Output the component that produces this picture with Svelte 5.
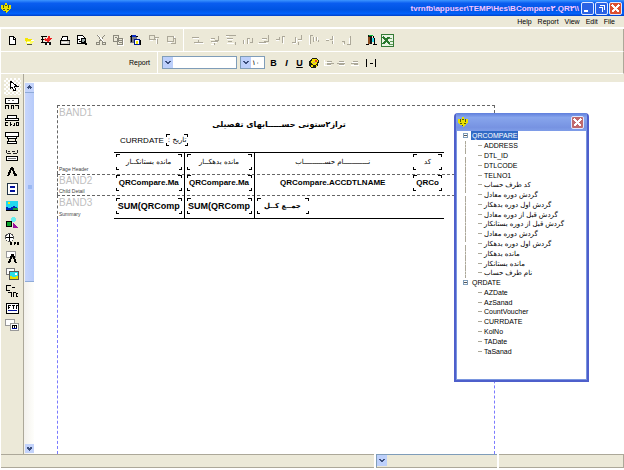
<script lang="ts">
    type Icon = { name: string; art: string };

    const menus = ['Help', 'Report', 'View', 'Edit', 'File'];

    const fileIcons: Icon[][] = [
        [
            { name: 'New', art: '<path d="M3.5 2.5h4l2 2v6h-6z" fill="#fff" stroke="#000"/><path d="M7 3v2h2" fill="none" stroke="#000"/>' },
            { name: 'Open', art: '<path d="M2 4h3v1h4v5H3z" fill="#f5e600"/><path d="M4 7h7l-2 3H3z" fill="#ff6"/><path d="M4 10.5h5M10 6.5h1" stroke="#554"/><path d="M8 6h3M4 8h3" stroke="#fff"/>' },
            { name: 'Save as', art: '<path d="M1 2.5h6M2.5 3v5M1 8.5h6M1 5.5h3" stroke="#000"/><path d="M5 4l2 2 1-4h2v2h2L8 8 4 6z" fill="#e22"/><path d="M5 8h6v3H5z" fill="#111"/><path d="M7 9h2v2H7z" fill="#fff"/>' },
        ],
        [
            { name: 'Print', art: '<path d="M4 2h5L8 6H2z" fill="#fff" stroke="#000"/><path d="M1.5 6.5h9v4h-9z" fill="#d4d0c8" stroke="#000"/><path d="M3 8.5h5" stroke="#fff"/><path d="M10 7h1v3h-1z" fill="#555"/>' },
            { name: 'Preview', art: '<path d="M1.5 1.5h5l2 2v6h-7z" fill="#fff" stroke="#000"/><path d="M1 5.5h3M3 7.5h3" stroke="#000"/><path d="M5 4h4v4H5z" fill="#9aa" stroke="#000"/><path d="M8 8l3 3" stroke="#000" stroke-width="2"/>' },
        ],
        [
            { name: 'Cut', art: '<path d="M2 1l7 8M10 1L3 9" stroke="#8b897d"/><path d="M3 1l7 8" stroke="#fff"/><path d="M1.5 8.5h3v2h-3zM7.5 8.5h3v2h-3z" fill="none" stroke="#8b897d"/>' },
            { name: 'Copy', art: '<path d="M1.5 1.5h5v6h-5zM5.5 4.5h5v6h-5z" fill="#ece9d8" stroke="#8b897d"/><path d="M3 3.5h2M7 6.5h3M7 8.5h3" stroke="#8b897d"/><path d="M11.5 5v6.5H6" stroke="#fff" fill="none"/>' },
            { name: 'Paste', art: '<path d="M1 2h7v7H1z" fill="#777a88"/><path d="M1 2.5h8M2.5 1v7" stroke="#000"/><path d="M3 1h4v2H3z" fill="#0a2cc0"/><path d="M5.5 5.5h5v5h-5z" fill="#fff" stroke="#001a90"/><path d="M7 7h2v3H7z" fill="#f6e800"/><path d="M11 6v5" stroke="#000"/>' },
        ],
        [
            { name: 'Send to back', art: '<path d="M1.5 1.5h5v4h-5zM5.5 5.5h4v4M5.5 3.5h5" fill="none" stroke="#aca899"/><path d="M2 6.5h3M8.5 4v6" stroke="#fff"/>' },
            { name: 'Bring to front', art: '<path d="M2.5 2.5h6v5h-6zM8 4.5h2v5H6" fill="none" stroke="#aca899"/><path d="M3 8.5h4M9.5 2v2" stroke="#fff"/>' },
        ],
    ];

    const alignIcons: Icon[] = [
        { name: 'Align left', art: '<path d="M0 3.5h7M2 8.5h9M6.5 6v2" stroke="#aca899"/><path d="M1 4.5h6M3 9.5h9" stroke="#fff"/>' },
        { name: 'Align centres', art: '<path d="M2 4.5h4M2 7.5h7M9.5 2v4H6M5.5 8v3" fill="none" stroke="#aca899"/><path d="M1 5.5h4M3 8.5h5M2 10.5h3" stroke="#fff"/>' },
        { name: 'Align right', art: '<path d="M1 1.5h10M2 4.5h6M3 7.5h4M10.5 8v3" stroke="#aca899"/><path d="M1 2.5h3M2 5.5h6M2 9.5h7" stroke="#fff"/>' },
        { name: 'Align tops', art: '<path d="M1.5 6v4M5.5 4v6M5 4.5h3M10.5 4v4H8" fill="none" stroke="#aca899"/><path d="M2.5 6v4M6.5 5v5" stroke="#fff"/>' },
        { name: 'Align middles', art: '<path d="M4 4.5h5M1 8.5h7M10.5 1v6H6" fill="none" stroke="#aca899"/><path d="M0 9.5h10M4 5.5h4" stroke="#fff"/>' },
        { name: 'Align bottoms', art: '<path d="M1 5.5h3M4.5 3v3M7.5 2v7M7 2.5h3" fill="none" stroke="#aca899"/><path d="M1 6.5h3M8.5 3v7" stroke="#fff"/>' },
        { name: 'Same width', art: '<path d="M1 8.5h4M4.5 3v6M7 5.5h4M10.5 1v5M7.5 8v3" stroke="#aca899"/><path d="M2 9.5h3M5.5 4v5M7 6.5h4" stroke="#fff"/>' },
        { name: 'Same height', art: '<path d="M2.5 1v9M5.5 3v5M8.5 3v4M10.5 6v2M2 1.5h3" stroke="#aca899"/><path d="M1.5 1v10M6.5 3v4M9.5 3v4" stroke="#fff"/>' },
        { name: 'Space across', art: '<path d="M2 6.5h3M8.5 2v3H6M8.5 7v3" fill="none" stroke="#aca899"/><path d="M2 5.5h3M9.5 2v8" stroke="#fff"/>' },
        { name: 'Space down', art: '<path d="M1 7.5h3M3.5 7v3M9.5 2v8H6" fill="none" stroke="#aca899"/><path d="M8.5 4v6M2 8.5v2" stroke="#fff"/>' },
    ];

    const textAlign: Icon[] = [
        { name: 'Text left', art: '<path d="M4 4.5h5M4 6.5h7M4 7.5h4" stroke="#aca899"/><path d="M1 5.5h7M2 8.5h6M1.5 3v6" stroke="#fff"/>' },
        { name: 'Text centre', art: '<path d="M3 4.5h5M1 6.5h8M3 7.5h5" stroke="#aca899"/><path d="M3 5.5h6M3 8.5h6" stroke="#fff"/>' },
        { name: 'Text right', art: '<path d="M4 4.5h5M2 6.5h7M5 7.5h4" stroke="#aca899"/><path d="M3 5.5h6M2 8.5h8" stroke="#fff"/>' },
    ];

    const tools: Icon[] = [
        { name: 'Select', art: '<path d="M5 1v8l2-2 2 4 2-1-2-4h3z" fill="#fff" stroke="#000"/>' },
        { name: 'Band', art: '<path d="M.5 1.5h13v5H.5z" fill="#fff" stroke="#000"/><path d="M3 3.5h2M7 3.5h2" stroke="#777"/><path d="M.5 12V8.5h3V12M6.5 12V8.5h2V12M10 8.5h3.5V12" fill="none" stroke="#000"/>' },
        { name: 'Child band', art: '<path d="M2.5 1.5h9v3h-9zM.5 4.5h13v2H.5z" fill="#fff" stroke="#000"/><path d="M3 8.5H.5v3H3M5.5 8v4M5 10.5h2M9.5 9v2.5H8M13.5 8v3.5H11V8.5h2" fill="none" stroke="#000"/>' },
        { name: 'Group band', art: '<path d="M.5 1.5h13v4H.5zM2.5 5.5h9v2h-9zM2.5 10.5h9v2h-9z" fill="#fff" stroke="#000"/><path d="M3.5 8v2M10.5 8v2" stroke="#000"/>' },
        { name: 'Sub detail', art: '<path d="M1.5 2v3M3 3.5h2M7 3.5h3M12.5 2v3M2 5.5h4M8 5.5h4" stroke="#222"/><path d="M1.5 8.5h11v4h-11z" fill="#fff" stroke="#000"/><path d="M3 10.5h8" stroke="#777"/>' },
        { name: 'Label', art: '<path d="M3 11L6.5 3h1L10 10h2" fill="none" stroke="#000" stroke-width="2"/>' },
        { name: 'Memo', art: '<path d="M2.5 1.5h10v11h-10z" fill="#fff" stroke="#234"/><path d="M5 5h5M5 9h5" stroke="#00109c" stroke-width="2"/>' },
        { name: 'Image', art: '<path d="M1 2h12v10H1z" fill="#20d8ee"/><path d="M1 8l4 1 4-2 4 2v3H1z" fill="#0028b8"/><path d="M8 9h5v3H8z" fill="#17a53c"/><path d="M3 3h2v2H3z" fill="#ffe600"/><path d="M1 11.5h12" stroke="#000"/>' },
        { name: 'Shape', art: '<path d="M1 5h5v5H1z" fill="#0aa52c" stroke="#000"/><circle cx="8.5" cy="3.5" r="2.5" fill="#6ee"/><path d="M8 6l5 6H8z" fill="#9b109b"/>' },
        { name: 'System data', art: '<circle cx="4.5" cy="4.5" r="4" fill="#fff" stroke="#555"/><path d="M4.5 1v7M1 4.5h7" stroke="#000"/><path d="M5 9l2 3M7 9l-2 3M9 9l1 3M11 9l-2 3M12 9l2 3M14 9l-2 3" stroke="#000"/>' },
        { name: 'DB text', art: '<path d="M1.5 1.5h9v6h-9z" fill="#fff" stroke="#999"/><path d="M4 13l3-8h1l3 8" fill="none" stroke="#000" stroke-width="2"/>' },
        { name: 'DB image', art: '<path d="M1.5 1.5h8v6h-8z" fill="#fff" stroke="#777"/><path d="M4 4h10v9H4z" fill="#555"/><path d="M5 5h8v7H5z" fill="#2ce0e8"/><path d="M5 9l4 1 4-1v3H5z" fill="#e8e000"/><path d="M10 6h2v2h-2z" fill="#fff"/>' },
        { name: 'Expression', art: '<path d="M6 1.5H1.5v5H5M7 3.5h3" fill="none" stroke="#000"/><path d="M3 8.5h3v4M8.5 13V8.5h2M13 9.5h-1.5v3H13" fill="none" stroke="#000"/>' },
        { name: 'Rich text', art: '<path d="M1.5 2.5h12v10h-12z" fill="#fff" stroke="#000"/><path d="M3.5 4v4M4 4.5h2M4 6.5h1M7 4.5h3M8.5 4v4M11.5 4v4M11 4.5h2" stroke="#000"/><path d="M3 9.5h9" stroke="#00109c"/>' },
        { name: 'DB rich text', art: '<path d="M.5 1.5h9v6h-9z" fill="#fff" stroke="#999"/><path d="M5.5 5.5h8v7h-8z" fill="#fff" stroke="#999"/><path d="M7.5 7v3M9.5 7v3M11.5 7v3M7 7.5h5" stroke="#000"/><path d="M7 10.5h5" stroke="#00109c"/>' },
    ];

    const tree = [
        {
            name: 'QRCOMPARE',
            fields: [
                'ADDRESS', 'DTL_ID', 'DTLCODE', 'TELNO1',
                'کد طرف حساب', 'گردش دوره معادل', 'گردش اول دوره بدهکار',
                'گردش قبل از دوره معادل', 'گردش قبل از دوره بستانکار', 'گردش دوره معادل',
                'گردش اول دوره بدهکار', 'مانده بدهکار', 'مانده بستانکار', 'نام طرف حساب',
            ],
        },
        {
            name: 'QRDATE',
            fields: ['AZDate', 'AzSanad', 'CountVoucher', 'CURRDATE', 'KolNo', 'TADate', 'TaSanad'],
        },
    ];

    let selected = $state('QRCOMPARE');
</script>

{#snippet logo()}
    <svg class="logo" viewBox="0 0 12 12" aria-hidden="true">
        <path d="M5 1h2v2h4v4L8 9 6 11 4 9 1 7V3h4z" fill="#e8e000" />
        <path d="M3.5 3v3M8.5 3v3M5 3.5h2M3 7.5h2M7 7.5h2M5.5 9v1" stroke="#4d5a18" />
    </svg>
{/snippet}

{#snippet arrow()}
    <svg class="arrow" viewBox="0 0 10 11" aria-hidden="true">
        <path d="M0 0h10v11H0z" fill="#bdd0fb" />
        <path d="M2.5 4L5 6.5 7.5 4" fill="none" stroke="#3c4f7c" stroke-width="2" />
    </svg>
{/snippet}

{#snippet iconButton(icon: Icon)}
    <button class="tool" aria-label={icon.name}>
        <svg viewBox="0 0 12 12" aria-hidden="true">{@html icon.art}</svg>
    </button>
{/snippet}

<div class="app">
    <header class="titlebar">
        {@render logo()}
        <h1>tvrnfb\appuser\TEMP\Hes\BCompare۲.QR۲\\</h1>
        <button class="win" aria-label="Minimize"><svg viewBox="0 0 11 11"><path d="M2 8h4" stroke="#fff" stroke-width="2" /></svg></button>
        <button class="win" aria-label="Restore"><svg viewBox="0 0 11 11"><path d="M2.5 4.5h4v4M4 2.5h4.5V7" fill="none" stroke="#fff" /></svg></button>
        <button class="win close" aria-label="Close"><svg viewBox="0 0 11 11"><path d="M2 2l7 7M9 2l-7 7" stroke="#fff" stroke-width="2" /></svg></button>
    </header>

    <nav class="menubar">
        {#each menus as menu}
            <button>{menu}</button>
        {/each}
    </nav>

    <div class="toolbar">
        <div class="groups">
            {#each fileIcons as group}
                <div class="group">
                    {#each group as icon}
                        {@render iconButton(icon)}
                    {/each}
                </div>
            {/each}
        </div>
        <div class="align">
            {#each alignIcons as icon}
                {@render iconButton(icon)}
            {/each}
        </div>
        <button class="tool" aria-label="Exit">
            <svg viewBox="0 0 12 12"><path d="M3 1h4v9H3z" fill="#111" /><path d="M3 3h2v7H3z" fill="#8b4a1c" /><path d="M4 1h4v1H4z" fill="#0b3" /><path d="M7 4h2v4H7z" fill="#3de" /><path d="M8.5 2v2M9.5 4v6M1 10.5h3M8 10.5h4" stroke="#000" /></svg>
        </button>
        <button class="tool excel" aria-label="Export to Excel">
            <svg viewBox="0 0 13 13"><path d="M.5 .5h12v12H.5z" fill="#e9f3e4" stroke="#347a35" /><path d="M2 3l7 7M8 3l-6 7" stroke="#28772c" stroke-width="2" /><path d="M8 4.5h3M9 7.5h3M8 10.5h4" stroke="#5c9c58" /></svg>
        </button>
    </div>

    <div class="toolbar format">
        <label class="caption" for="font">Report</label>
        <div class="combo wide">
            <select id="font"><option></option></select>
            {@render arrow()}
        </div>
        <div class="combo small">
            <select aria-label="Font size"><option>۱۰</option></select>
            {@render arrow()}
        </div>
        <button class="tool letter"><b>B</b></button>
        <button class="tool letter"><i>I</i></button>
        <button class="tool letter"><u>U</u></button>
        <button class="tool" aria-label="Colour">
            <svg viewBox="0 0 12 12"><path d="M4 1h5l2 3-1 4-3 3H3L1 8V4z" fill="#1b1b10" /><path d="M4 2h4l2 2-1 3-3 1-3-2z" fill="#f3df00" /><path d="M7 3h2v2H7z" fill="#e2442a" /><path d="M3 8h2v2H3zM8 8h1v2H8z" fill="#f3df00" /><path d="M5 5h2v1H5z" fill="#b99" /></svg>
        </button>
        <div class="text-align">
            {#each textAlign as icon}
                {@render iconButton(icon)}
            {/each}
        </div>
        <button class="tool" aria-label="Stretch">
            <svg viewBox="0 0 12 12"><path d="M1.5 2v8M10.5 2v8M5 6.5h3" stroke="#000" /></svg>
        </button>
    </div>

    <main>
        <aside>
            {#each tools as tool, i}
                <button class="side" class:active={i === 0} aria-label={tool.name}>
                    <svg viewBox="0 0 14 14" aria-hidden="true">{@html tool.art}</svg>
                </button>
            {/each}
        </aside>

        <div class="scroll">
            <button aria-label="Scroll up"><svg viewBox="0 0 9 9"><path d="M2.5 5.5l2-2 2 2" fill="none" stroke="#3c4f7c" stroke-width="2" /></svg></button>
            <div class="track"><div class="thumb"></div></div>
            <button aria-label="Scroll down"><svg viewBox="0 0 9 9"><path d="M2.5 3.5l2 2 2-2" fill="none" stroke="#3c4f7c" stroke-width="2" /></svg></button>
        </div>

        <div class="canvas">
            <div class="page">
                <section class="band header"><span>BAND1</span><small>Page Header</small></section>
                <section class="band detail"><span>BAND2</span><small>Child Detail</small></section>
                <section class="band summary"><span>BAND3</span><small>Summary</small></section>
                <div class="blank"></div>

                <div class="report">
                    <h2 dir="rtl">تراز۲ستونی حســـــابهای تفصیلی</h2>
                    <p><span>CURRDATE</span><span class="field date" dir="rtl">تاریخ :</span></p>
                    <table>
                        <thead>
                            <tr>
                                <th><div class="field">مانده بستانکــار</div></th>
                                <th><div class="field">مانده بدهکــار</div></th>
                                <th><div class="field plain">نــــــــــــام حســــــــــاب</div></th>
                                <th><div class="field">کد</div></th>
                            </tr>
                        </thead>
                        <tbody>
                            <tr>
                                <td><div class="field">QRCompare.Ma</div></td>
                                <td><div class="field">QRCompare.Ma</div></td>
                                <td><div class="field plain">QRCompare.ACCDTLNAME</div></td>
                                <td><div class="field">QRCo</div></td>
                            </tr>
                            <tr class="sum">
                                <td><div class="field">SUM(QRComp</div></td>
                                <td><div class="field">SUM(QRComp</div></td>
                                <td><div class="field total">جمــع کــل</div></td>
                                <td></td>
                            </tr>
                        </tbody>
                    </table>
                </div>
            </div>
        </div>

        <div class="palette">
            <div class="palette-title">
                {@render logo()}
                <button class="win close" aria-label="Close fields"><svg viewBox="0 0 11 11"><path d="M2 2l7 7M9 2l-7 7" stroke="#fff" stroke-width="2" /></svg></button>
            </div>
            <div class="tree">
                {#each tree as dataset}
                    <button class="root" class:selected={selected === dataset.name} onclick={() => (selected = dataset.name)}>
                        <i></i><span>{dataset.name}</span>
                    </button>
                    {#each dataset.fields as field}
                        <button class="leaf" class:last={dataset.name === 'QRDATE'}><span>{field}</span></button>
                    {/each}
                {/each}
            </div>
        </div>
    </main>

    <footer>
        <div class="cell"></div>
        <div class="cell status-combo">{@render arrow()}</div>
        <div class="cell end"></div>
    </footer>
</div>

<style>
    :global(body) {
        margin: 0;
        background: #fff;
    }

    .app {
        display: flex;
        flex-direction: column;
        min-height: 100vh;
        box-sizing: border-box;
        padding-bottom: 2px;
        background: #fff;
        color: #000;
        font-family: "Liberation Sans", "DejaVu Sans", sans-serif;
        font-size: 8px;
    }

    button {
        display: flex;
        align-items: center;
        justify-content: center;
        padding: 0;
        border: none;
        background: none;
        color: inherit;
        font: inherit;
    }

    svg {
        display: block;
        shape-rendering: crispEdges;
    }

    .logo {
        width: 12px;
        height: 12px;
        margin-right: auto;
    }

    .titlebar {
        display: flex;
        align-items: center;
        gap: 1px;
        height: 16px;
        padding-right: 2px;
        background: linear-gradient(#3d95ff, #0a5df0 20%, #0054e3 60%, #0262fb 85%, #0040c8);
    }

    .titlebar h1 {
        margin: 0 1px 0 0;
        color: #f4c4ff;
        font-size: 8px;
        font-weight: bold;
    }

    .win {
        width: 13px;
        height: 13px;
        box-sizing: border-box;
        border: 1px solid #dfe8ff;
        border-radius: 2px;
        background: #2a62e4;
    }

    .win svg {
        width: 11px;
        height: 11px;
    }

    .win.close {
        background: #dd5030;
    }

    .menubar {
        display: flex;
        justify-content: flex-end;
        gap: 6px;
        height: 11px;
        padding-right: 9px;
        border-bottom: 2px solid #fff;
        background: #ece9d8;
        font-size: 7px;
    }

    .toolbar {
        display: flex;
        align-items: center;
        height: 22px;
        margin-left: 1px;
        border-right: 1px solid #aca899;
        border-bottom: 1px solid #fff;
        background: #ece9d8;
    }

    .groups {
        display: flex;
        align-self: stretch;
        align-items: center;
        gap: 3px;
        padding: 0 4px 0 3px;
        border-right: 1px solid #fff;
    }

    .group {
        display: flex;
        gap: 1px;
    }

    .tool {
        width: 16px;
        height: 16px;
    }

    .tool svg {
        width: 12px;
        height: 12px;
    }

    .tool.excel svg {
        width: 13px;
        height: 13px;
    }

    .align {
        display: grid;
        grid-template-columns: repeat(10, 1fr);
        width: 165px;
        margin: 0 8px 0 6px;
    }

    .format {
        height: 21px;
    }

    .caption {
        display: flex;
        align-items: center;
        justify-content: flex-end;
        align-self: stretch;
        width: 149px;
        padding-right: 7px;
        border-right: 1px solid #fff;
        font-size: 7px;
    }

    .combo {
        position: relative;
        height: 13px;
        margin-left: 3px;
    }

    .combo.wide {
        width: 75px;
        margin-left: 4px;
    }

    .combo.small {
        width: 25px;
        margin-right: 2px;
    }

    .combo select {
        display: block;
        width: 100%;
        height: 13px;
        padding: 0 1px 0 11px;
        border: 1px solid #7f9db9;
        border-radius: 0;
        background: #fff;
        color: #000;
        appearance: none;
        font: 7px "DejaVu Sans", sans-serif;
    }

    .arrow {
        width: 10px;
        height: 11px;
    }

    .combo .arrow {
        position: absolute;
        top: 1px;
        left: 1px;
        pointer-events: none;
    }

    .letter {
        width: 13px;
        font-size: 9px;
        font-weight: bold;
    }

    .text-align {
        display: flex;
        margin-right: 2px;
    }

    .text-align .tool {
        width: 13px;
    }

    main {
        position: relative;
        display: flex;
        flex: 1;
        margin-left: 1px;
        background: #ece9d8;
    }

    aside {
        display: flex;
        flex-direction: column;
        align-items: center;
        width: 22px;
        padding-top: 4px;
        border-right: 1px solid #aca899;
    }

    .side {
        width: 17px;
        height: 17px;
    }

    .side svg {
        width: 14px;
        height: 14px;
    }

    .side.active {
        background: repeating-conic-gradient(#fff 0 25%, #ece9d8 0 50%) 0 0 / 4px 4px;
    }

    .scroll {
        display: flex;
        flex-direction: column;
        width: 9px;
        margin-top: 8px;
        padding: 1px 0 1px 1px;
        background: linear-gradient(to right, #f3f1ec, #fefefb);
    }

    .scroll button {
        height: 9px;
        background: #c3d3fb;
    }

    .scroll svg {
        width: 9px;
        height: 9px;
    }

    .track {
        flex: 1;
    }

    .thumb {
        height: 54%;
        box-sizing: border-box;
        border-top: 1px solid #8fabd8;
        border-bottom: 1px solid #8fabd8;
        background: linear-gradient(#9bb8f2, #9bb8f2) center / 4px 4px no-repeat, linear-gradient(to right, #c8d6fb, #b7cbfa);
    }

    .canvas {
        display: flex;
        flex: 1;
        margin-top: 8px;
        padding: 23px 0 0 23px;
        background: #fff;
    }

    .page {
        position: relative;
        display: flex;
        flex-direction: column;
        width: 438px;
        box-sizing: border-box;
    }

    .band {
        display: flex;
        flex-direction: column;
        justify-content: space-between;
        box-sizing: border-box;
        padding: 2px 1px;
        border: 1px dashed #666;
        border-bottom: none;
    }

    .band span {
        color: #c0c0c0;
        font-size: 10px;
        line-height: 10px;
    }

    .band small {
        color: #444;
        font-size: 5px;
        line-height: 6px;
    }

    .band.header {
        height: 69px;
    }

    .band.detail {
        height: 21px;
        padding: 1px;
    }

    .band.summary {
        height: 24px;
    }

    .blank {
        flex: 1;
        border: 1px dashed #7a7aff;
        border-top: none;
        border-bottom: none;
    }

    .report {
        position: absolute;
        top: 12px;
        left: 57px;
        width: 330px;
    }

    .report h2 {
        margin: 0;
        font: bold 8px/16px "DejaVu Sans", sans-serif;
        text-align: center;
    }

    .report p {
        display: flex;
        align-items: center;
        gap: 2px;
        height: 12px;
        margin: 1px 0 6px 6px;
    }

    .date {
        padding: 0 2px;
        font: 7px/12px "DejaVu Sans", sans-serif;
    }

    table {
        width: 100%;
        height: 67px;
        border-collapse: collapse;
        border-top: 1px solid #000;
        border-bottom: 1px solid #000;
        table-layout: fixed;
    }

    th,
    td {
        box-sizing: border-box;
        width: 70px;
        padding: 1px 2px;
        text-align: center;
        font-size: 8px;
        font-weight: bold;
        white-space: nowrap;
    }

    th {
        font: 7px "DejaVu Sans", sans-serif;
    }

    th:nth-child(-n + 2),
    td:nth-child(-n + 2) {
        border-right: 1px solid #000;
    }

    th:nth-child(3) {
        width: auto;
    }

    th:last-child {
        width: 33px;
    }

    .sum td {
        font-size: 9px;
    }

    .field {
        --h: linear-gradient(#000, #000);
        background:
            var(--h) 0 0 / 4px 1px, var(--h) 0 0 / 1px 3px,
            var(--h) 100% 0 / 4px 1px, var(--h) 100% 0 / 1px 3px,
            var(--h) 0 100% / 1px 3px, var(--h) 0 100% / 3px 1px,
            var(--h) 100% 100% / 3px 1px, var(--h) 100% 100% / 1px 3px;
        background-repeat: no-repeat;
    }

    td .field,
    th .field {
        height: 16px;
        line-height: 16px;
    }

    .plain {
        background: none;
    }

    .field.total {
        width: 52px;
        font: bold 7px/16px "DejaVu Sans", sans-serif;
    }

    .palette {
        position: absolute;
        top: 39px;
        left: 453px;
        width: 135px;
        box-sizing: border-box;
        border: 2px solid #4e5fcb;
        border-top: none;
        border-radius: 4px 4px 0 0;
        background: #fff;
        box-shadow: inset 0 -1px #7a96df, inset 1px 0 #7a96df, inset -1px 0 #7a96df;
        overflow: hidden;
    }

    .palette-title {
        display: flex;
        align-items: center;
        height: 18px;
        padding: 0 3px 0 1px;
        background: linear-gradient(#5f7fdc, #87a5ec 25%, #7793e2 80%, #7f9de8);
    }

    .palette .win.close {
        background: #c0696c;
    }

    .tree {
        display: grid;
        grid-auto-rows: 1fr;
        height: 225px;
        margin: 0 3px 24px 7px;
        font-size: 7px;
    }

    .tree button {
        justify-content: flex-start;
        min-height: 0;
        line-height: 9px;
        white-space: nowrap;
    }

    .root i {
        width: 3px;
        height: 3px;
        margin-right: 3px;
        border: 1px solid #7f9db9;
        background: linear-gradient(#555, #555) center / 3px 1px no-repeat, #fff;
    }

    .root span {
        padding: 0 1px;
    }

    .selected span {
        background: #316ac5;
        color: #fff;
    }

    .leaf {
        margin-left: 2px;
        border-left: 1px dashed #aca899;
    }

    .leaf.last {
        border-left-color: transparent;
    }

    .leaf::before {
        content: "";
        width: 4px;
        margin: 0 2px 0 12px;
        border-top: 1px solid #aca899;
    }

    footer {
        display: flex;
        gap: 2px;
        height: 14px;
        padding-left: 1px;
    }

    .cell {
        flex: 3 1 0;
        box-sizing: border-box;
        border-top: 1px solid #aca899;
        border-bottom: 1px solid #aca899;
        background: #ece9d8;
    }

    .status-combo {
        flex: 0 0 121px;
        border-top-color: #7f9db9;
        border-left: 1px solid #7f9db9;
    }

    .end {
        flex: 1 1 0;
        border-right: 1px solid #aca899;
    }
</style>
